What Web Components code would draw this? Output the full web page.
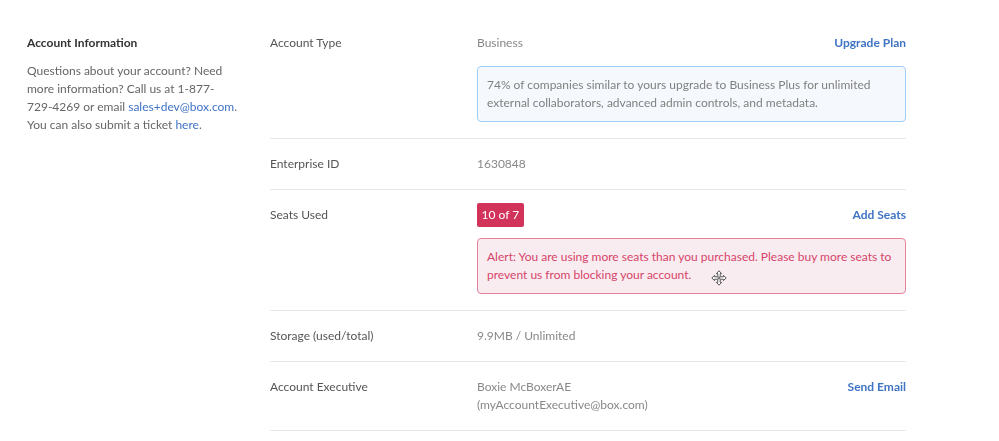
<!doctype html>
<html lang="en">
<head>
<meta charset="utf-8">
<title>Account Information</title>
<style>
html,body{margin:0;background:#fff}
body{font:12px/18px Lato,"Open Sans",sans-serif;color:#555}
</style>
</head>
<body>
<account-page>
  <info-panel slot="side" heading="Account Information">
    Questions about your account? Need more information? Call us at 1-877-729-4269 or email <a href="#">sales+dev@box.com</a>. You can also submit a ticket <a href="#">here</a>.
  </info-panel>
  <account-row label="Account Type" action="Upgrade Plan">
    Business
    <notice-box slot="notice" kind="info">74% of companies similar to yours upgrade to Business Plus for unlimited external collaborators, advanced admin controls, and metadata.</notice-box>
  </account-row>
  <account-row label="Enterprise ID">1630848</account-row>
  <account-row label="Seats Used" action="Add Seats">
    <seat-badge>10 of 7</seat-badge>
    <notice-box slot="notice" kind="alert">Alert: You are using more seats than you purchased. Please buy more seats to prevent us from blocking your account.<move-cursor></move-cursor></notice-box>
  </account-row>
  <account-row label="Storage (used/total)">9.9MB / Unlimited</account-row>
  <account-row label="Account Executive" action="Send Email">Boxie McBoxerAE<br>(myAccountExecutive@box.com)</account-row>
</account-page>
<script>
function def(name, css, html, init){
  customElements.define(name, class extends HTMLElement{
    connectedCallback(){
      if(this.shadowRoot) return;
      const r=this.attachShadow({mode:'open'});
      r.innerHTML='<style>'+css+'</style>'+html;
      if(init) init(this,r);
    }
  });
}
def('account-page',
  ':host{display:grid;grid-template-columns:243px 636px;padding:18px 0 0 27px;filter:blur(.35px);font:12px/18px Lato,sans-serif}main{display:block}',
  '<slot name="side"></slot><main><slot></slot></main>');
def('info-panel',
  ':host{display:block;width:212px;padding-top:16px;color:#666}h2{margin:0 0 10px;font-size:12px;line-height:18px;font-weight:700;color:#333}::slotted(a){color:#3f73c4;text-decoration:none}',
  '<h2></h2><slot></slot>',
  (h,r)=>{r.querySelector('h2').textContent=h.getAttribute('heading')});
def('account-row',
  ':host{display:grid;grid-template-columns:207px 1fr auto;padding:16px 0;border-bottom:1px solid #e8e8e8;color:#888}.label{color:#555}.action{color:#3f73c4;font-weight:700}.value{min-width:0}.notice{grid-column:2/4}',
  '<div class="label"></div><div class="value"><slot></slot></div><div class="action"></div><div class="notice"><slot name="notice"></slot></div>',
  (h,r)=>{r.querySelector('.label').textContent=h.getAttribute('label');
    r.querySelector('.action').textContent=h.getAttribute('action')||'';
    if(!h.querySelector('[slot=notice]')) r.querySelector('.notice').remove();});
def('notice-box',
  ':host{display:block;position:relative;margin-top:14px;padding:9px;border:1px solid #9fcdf5;border-radius:4px;background:#f5f9fd;color:#808080}:host([kind=alert]){border-color:#e5829b;background:#f9ecf0;color:#d6446b}',
  '<slot></slot>');
def('seat-badge',
  ':host{display:inline-block;margin:-3px 0;padding:3px 4.5px;height:18px;border-radius:2px;background:#d1335b;color:#fff;vertical-align:top}',
  '<slot></slot>');
def('move-cursor',
  ':host{position:absolute;left:233px;top:31px;width:16px;height:16px;display:block}svg{display:block}',
  '<svg width="16" height="16" viewBox="0 0 16 16" fill="#fff" stroke="#555" stroke-width="1" stroke-linejoin="round"><path d="M8 .8 10.6 3.6H9.2V6.8H12.4V5.4L15.2 8 12.4 10.6V9.2H9.2V12.4H10.6L8 15.2 5.4 12.4H6.8V9.2H3.6V10.6L.8 8 3.6 5.4V6.8H6.8V3.6H5.4Z"/><circle cx="8" cy="8" r="1.4" fill="#777" stroke="none"/></svg>');
</script>
</body>
</html>
